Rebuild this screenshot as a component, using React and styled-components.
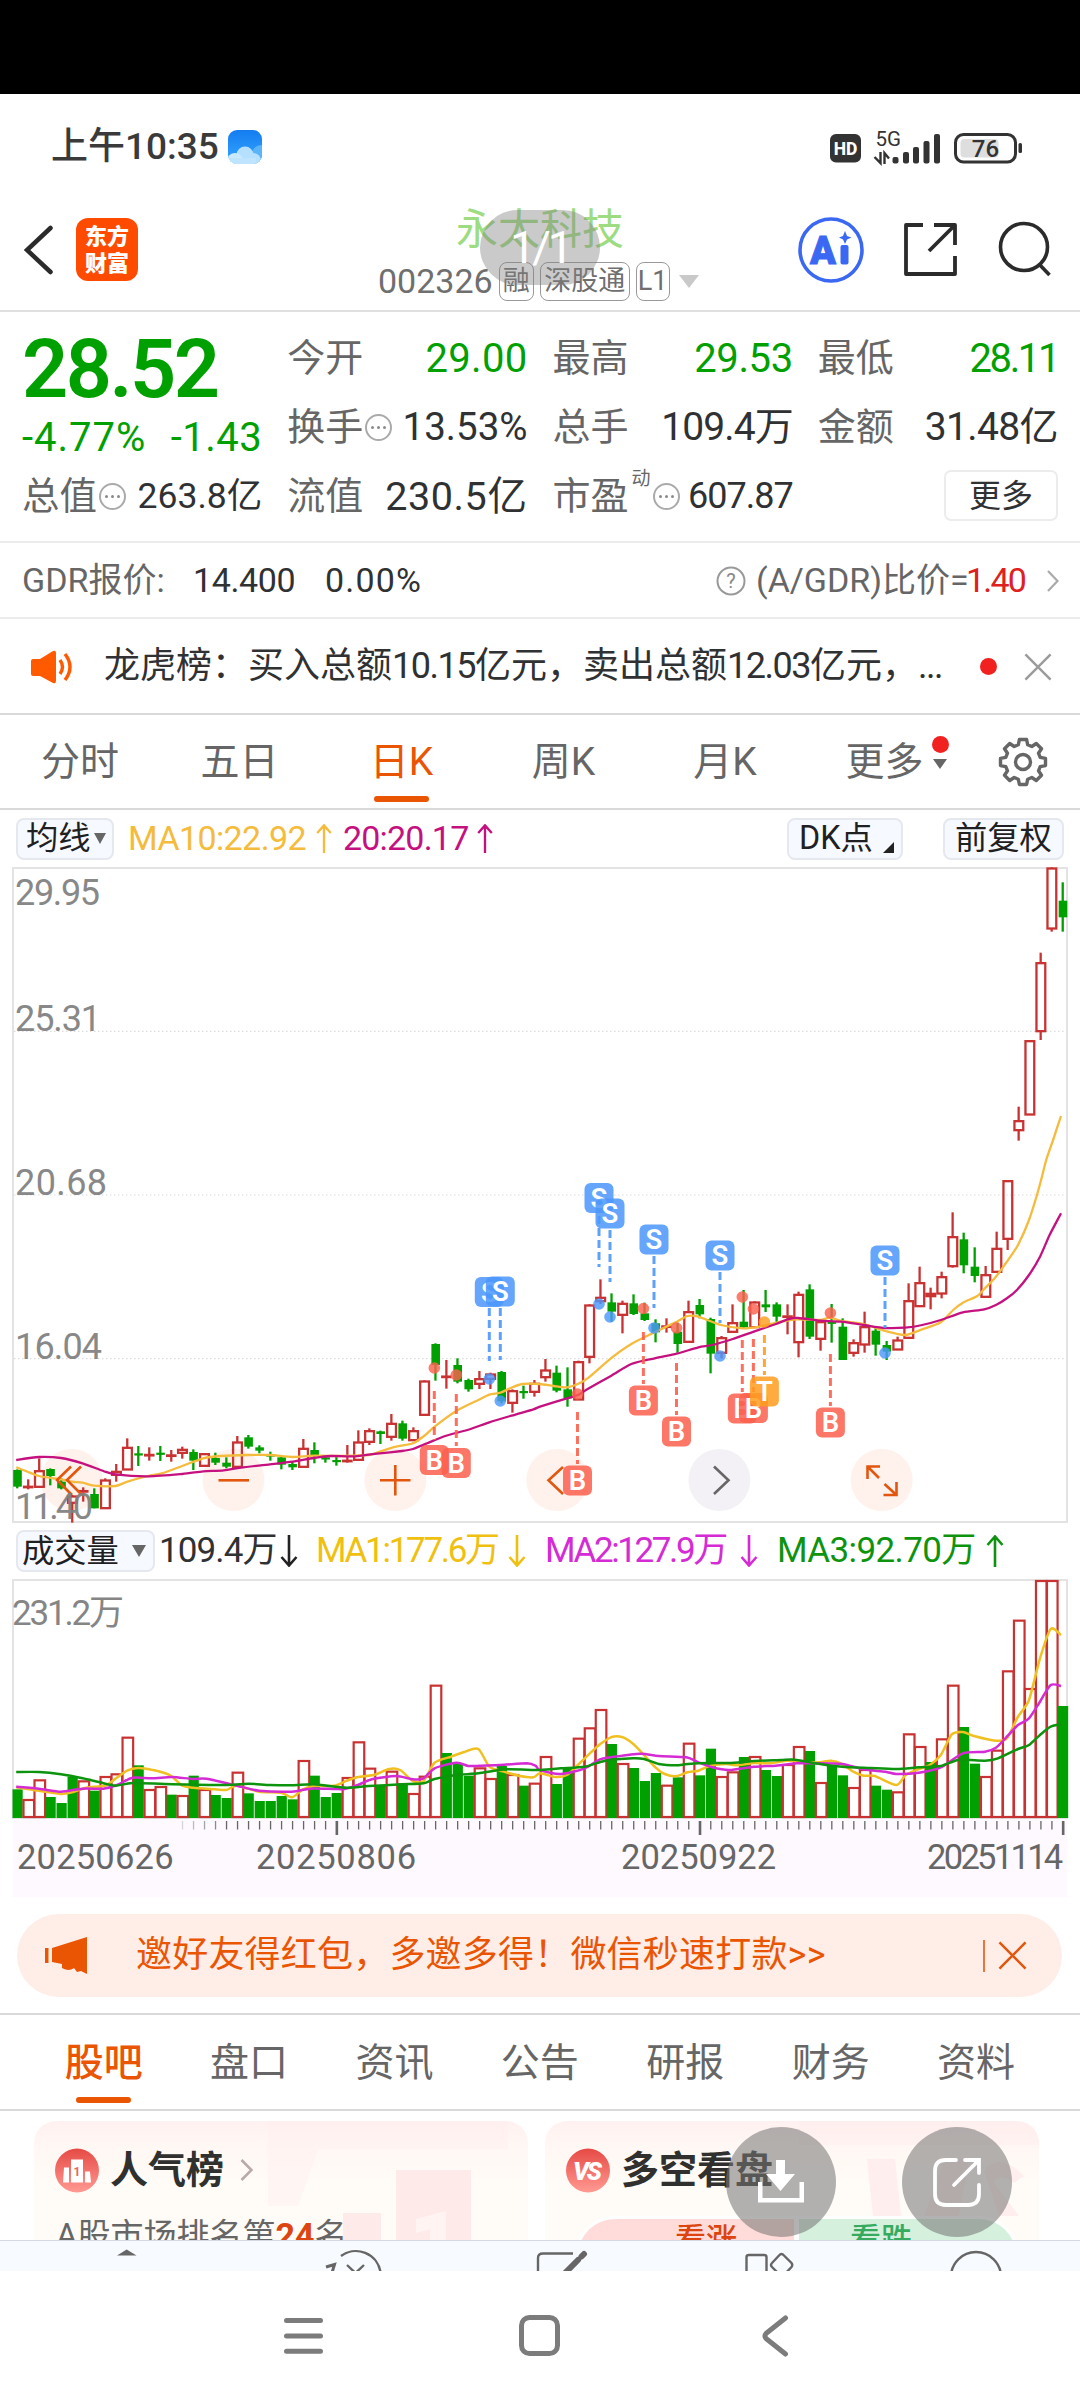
import React from "react";
import styled, { createGlobalStyle, css } from "styled-components";

const GREEN = "#00a000";
const RED = "#c93232";
const ORANGE = "#ea5504";
const YELLOW = "#f5bb3c";
const PINK = "#c5117f";

const Global = createGlobalStyle`
  html, body { margin: 0; padding: 0; background: #fff; }
  * { box-sizing: border-box; }
  body { font-family: Roboto, "Noto Sans CJK SC", sans-serif; color: #303133; }
  svg { display: block; }
`;

const Page = styled.div`
  position: relative;
  width: 1080px;
  height: 2400px;
  overflow: hidden;
  display: flex;
  flex-direction: column;
  background: #fff;
`;

const Text = styled.span`
  display: block;
  white-space: nowrap;
  line-height: 1.2;
  font-size: ${(p) => p.$size || 36}px;
  color: ${(p) => p.$color || "#303133"};
  font-weight: ${(p) => p.$weight || 400};
  letter-spacing: ${(p) => p.$ls || 0}px;
`;

const Num = styled.span`
  letter-spacing: -1.5px;
`;

const Cutout = styled.div`
  height: 94px;
  background: #000;
`;

const StatusBar = styled.div`
  height: 106px;
  padding: 1px 57px 0 51px;
  display: flex;
  align-items: center;
  justify-content: space-between;
`;

const StatusGroup = styled.div`
  display: flex;
  align-items: center;
  gap: 9px;
`;

const Header = styled.header`
  position: relative;
  height: 112px;
  border-bottom: 2px solid #dfdfdf;
  display: grid;
  grid-template-columns: 24px 52px 302px 1fr 282px;
`;

const BackSlot = styled.div`
  grid-column: 2;
  padding-top: 24px;
`;

const Logo = styled.div`
  margin-top: 18px;
  width: 62px;
  height: 63px;
  border-radius: 12px;
  background: #ff4b00;
  display: flex;
  flex-direction: column;
  align-items: center;
  justify-content: center;
`;

const LogoLine = styled.span`
  color: #fff;
  font-size: 22px;
  line-height: 27px;
  font-weight: 900;
`;

const TitleBlock = styled.div`
  display: flex;
  flex-direction: column;
  padding-top: 4px;
`;

const StockName = styled.h1`
  margin: 0 0 0 78px;
  font-size: 42px;
  line-height: 52px;
  font-weight: 400;
  color: #9ddc80;
`;

const CodeRow = styled.div`
  display: flex;
  align-items: center;
  margin-top: 5px;
  gap: 6px;
`;

const Tag = styled.span`
  height: 39px;
  width: ${(p) => p.$w}px;
  border: 1.5px solid #999;
  border-radius: 8px;
  display: flex;
  align-items: center;
  justify-content: center;
  color: #6f6f6f;
  font-size: 27px;
  line-height: 1;
  white-space: nowrap;
`;

const Triangle = styled.i`
  display: block;
  width: 0;
  height: 0;
  border-left: ${(p) => p.$w / 2}px solid transparent;
  border-right: ${(p) => p.$w / 2}px solid transparent;
  border-top: ${(p) => p.$h}px solid ${(p) => p.$color || "#666"};
  margin-left: ${(p) => p.$ml || 0}px;
`;

const HeaderActions = styled.div`
  display: grid;
  grid-template-columns: 102px 98px 54px;
  padding-top: 17px;
`;

const PagePill = styled.div`
  position: absolute;
  left: 480px;
  top: 10px;
  width: 120px;
  height: 75px;
  border-radius: 38px;
  background: rgba(128, 128, 128, 0.42);
  color: #fff;
  font-size: 45px;
  line-height: 75px;
  text-align: center;
  letter-spacing: -3px;
`;

const Quote = styled.section`
  height: 231px;
  padding: 0 22px;
  border-bottom: 2px solid #ececec;
  display: grid;
  grid-template-columns: repeat(4, 1fr);
  column-gap: 25px;
`;

const PriceColumn = styled.div`
  display: flex;
  flex-direction: column;
`;

const Price = styled.div`
  margin-top: 17px;
  height: 77px;
  line-height: 82px;
  font-size: 81px;
  font-weight: 600;
  color: ${GREEN};
  letter-spacing: -2.5px;
`;

const Split = styled.div`
  display: flex;
  align-items: center;
  justify-content: space-between;
  height: ${(p) => p.$h || 69}px;
  min-width: 0;
`;

const StatColumn = styled.div`
  display: flex;
  flex-direction: column;
  padding-top: 12px;
`;

const LabelGroup = styled.div`
  display: flex;
  align-items: center;
  gap: 2px;
`;

const Sup = styled.sup`
  align-self: flex-start;
  font-size: 19px;
  line-height: 19px;
  color: #666;
  margin: -5px 1px 0 1px;
`;

const Dots = styled.span`
  width: 27px;
  height: 27px;
  border: 2px solid #aaa;
  border-radius: 50%;
  display: flex;
  align-items: center;
  justify-content: center;
  gap: 3px;
  margin-left: ${(p) => p.$ml || 0}px;
  &::before, &::after, i { content: ""; width: 3px; height: 3px; border-radius: 50%; background: #8a8a8a; }
`;

const MoreButton = styled.button`
  align-self: flex-end;
  margin: 8px 0 0 0;
  width: 114px;
  height: 51px;
  padding: 0;
  border: 2px solid #ececec;
  border-radius: 7px;
  background: #fff;
  font: 400 32px/1 Roboto, "Noto Sans CJK SC", sans-serif;
  color: #303133;
`;

const GdrRow = styled.div`
  height: 76px;
  border-bottom: 2px solid #ececec;
  display: grid;
  grid-template-columns: 171px 132px 1fr 40px 210px 81px 12px;
  padding: 1px 21px 0 22px;
  align-items: center;
`;

const Ticker = styled.div`
  height: 96px;
  border-bottom: 2px solid #d9d9d9;
  display: grid;
  grid-template-columns: 73px 876px 44px 28px;
  padding: 1px 0 0 31px;
  align-items: center;
`;

const RedDot = styled.i`
  display: block;
  width: 17px;
  height: 17px;
  border-radius: 50%;
  background: #f0211f;
`;

const TabBar = styled.nav`
  height: ${(p) => p.$h}px;
  border-top: ${(p) => (p.$top ? "2px solid #d9d9d9" : "0")};
  border-bottom: 2px solid #d9d9d9;
  display: flex;
  padding: 0 ${(p) => p.$pad};
`;

const Tab = styled.div`
  position: relative;
  width: ${(p) => p.$w}px;
  height: 100%;
  padding-top: 2px;
  display: flex;
  align-items: center;
  justify-content: center;
  font-size: 39px;
  line-height: 1;
  color: ${(p) => (p.$active ? ORANGE : "#666")};
  font-weight: ${(p) => (p.$active && p.$bold ? 500 : 400)};
  ${(p) =>
    p.$active &&
    css`
      &::after {
        content: "";
        position: absolute;
        left: 50%;
        bottom: 6px;
        width: 55px;
        height: 6px;
        margin-left: -27.5px;
        border-radius: 3px;
        background: ${ORANGE};
      }
    `}
`;

const TabBadge = styled.div`
  display: flex;
  flex-direction: column;
  align-items: center;
  gap: 6px;
  margin-left: 8px;
  margin-top: -21px;
`;

const GearSlot = styled.div`
  flex: 1;
  display: flex;
  align-items: center;
  padding-left: 11px;
`;

const IndicatorRow = styled.div`
  height: ${(p) => p.$h}px;
  padding-left: 16px;
  display: grid;
  grid-template-columns: ${(p) => p.$cols};
  align-items: center;
`;

const Chip = styled.div`
  width: ${(p) => p.$w}px;
  height: 42px;
  border: 2px solid #e6e8ef;
  border-radius: 8px;
  background: #f6f9ff;
  display: flex;
  align-items: center;
  padding-left: ${(p) => p.$pl}px;
  font-size: 32.3px;
  line-height: 1;
  color: #1f2021;
  white-space: nowrap;
`;

const CornerMark = styled.i`
  display: block;
  width: 0;
  height: 0;
  border-left: 11px solid transparent;
  border-bottom: 11px solid #222;
  margin: 18px 0 0 10px;
`;

const AxisArea = styled.div`
  height: 78px;
  margin: 0 13px;
  background: #fdf9fe;
`;

const Dates = styled.div`
  display: grid;
  grid-template-columns: 239px 365px 306px 1fr;
  padding-left: 4px;
  height: 44px;
  align-items: center;
`;

const Banner = styled.div`
  height: 83px;
  margin: 17px 18px 16px 17px;
  border-radius: 42px;
  background: #ffeee7;
  display: grid;
  grid-template-columns: 91px 847px 15px 30px;
  padding-left: 28px;
  align-items: center;
`;

const BannerRule = styled.i`
  width: 1.5px;
  height: 32px;
  background: #e8763a;
`;

const Cards = styled.section`
  height: 129px;
  padding: 10px 41px 0 34px;
  display: grid;
  grid-template-columns: 494px 494px;
  column-gap: 17px;
  overflow: hidden;
`;

const Card = styled.article`
  position: relative;
  height: 160px;
  border-radius: 22px;
  background: linear-gradient(180deg, #fff1f1 0, #fff7f3 22px, #fffbf6 60px);
  overflow: hidden;
`;

const Watermark = styled.div`
  position: absolute;
  right: 0;
  top: 0;
`;

const CardHead = styled.div`
  position: relative;
  display: flex;
  align-items: center;
  height: 98px;
  padding-left: 21px;
`;

const CardTitle = styled.h2`
  margin: 0 16px 0 11px;
  font-size: 38px;
  line-height: 1;
  font-weight: 600;
  color: #30302e;
`;

const RankLine = styled.p`
  position: relative;
  margin: -3px 0 0 22px;
  font-size: 33px;
  line-height: 38px;
  color: #666;
  b { color: #dc4410; font-weight: 700; font-size: 34px; }
`;

const Poll = styled.div`
  position: relative;
  margin: -3px 20px 0 30px;
  height: 80px;
  display: grid;
  grid-template-columns: 216px 1fr;
  column-gap: 5px;
  border: 3px solid #fff;
  border-radius: 40px;
  background: #fff;
  overflow: hidden;
`;

const PollSide = styled.div`
  background: ${(p) => p.$bg};
  color: ${(p) => p.$color};
  font-size: 31px;
  line-height: 42px;
  font-weight: 500;
  padding-left: ${(p) => p.$pl}px;
`;

const BottomBar = styled.div`
  height: 31px;
  border-top: 1px solid #d4d8e0;
  background: #f7faff;
  overflow: hidden;
`;

const NavBar = styled.div`
  flex: 1;
  display: grid;
  grid-template-columns: 235px 243px 28px;
  align-items: center;
  padding-left: 284px;
`;

const FloatButton = styled.button`
  position: absolute;
  left: ${(p) => p.$x}px;
  top: 2127px;
  width: 110px;
  height: 110px;
  padding: 0;
  border: 0;
  border-radius: 50%;
  background: rgba(118, 118, 118, 0.56);
  display: flex;
  align-items: center;
  justify-content: center;
`;

/* ---------- market data ---------- */

const bx = (i) => 17.2 + 11.005 * i;

const seriesA = [
  "G688,690,740,745", "R718,738,744,748", "R655,692,742,742", "G685,687,708,736", "G715,725,745,748",
  "R765,768,790,848", "R742,750,758,785", "G745,762,805,805", "R715,720,806,806", "R672,694,706,725",
  "R595,622,690,690", "G618,640,644,678", "R622,643,648,662", "G618,638,642,663", "R630,645,649,665",
  "R620,628,640,656", "G628,636,662,690", "R640,641,679,679", "G638,654,668,675", "G652,668,680,685",
  "R588,606,682,682", "G585,592,620,626", "G616,622,632,640", "G635,643,650,662", "G648,652,674,688",
  "G665,672,682,690", "R597,625,682,682", "G607,630,645,670", "G645,652,657,668", "G648,660,666,677",
  "R615,660,666,668", "R571,606,661,661", "R565,572,607,615", "G572,574,582,612", "R522,550,592,602",
  "G542,550,596,602", "R562,572,602,602", "R421,423,526,526", "G310,312,375,422", "R360,408,413,446",
  "G355,375,425,430", "G416,420,448,455", "R393,416,433,447", "R398,402,418,447", "G393,396,484,490",
  "R448,452,490,518", "G437,453,459,476", "R420,430,457,470",
];
const seriesB = [
  "R657,690,713,725", "G677,698,752,757", "G682,748,775,800", "R662,665,780,780", "R493,495,652,670",
  "R418,472,485,492", "G460,487,515,545", "R482,490,526,580", "G463,490,522,525", "G488,520,540,543",
  "G538,550,577,607", "R535,557,563,578", "G548,575,612,638", "R482,515,607,607", "G477,495,523,535",
  "G533,537,641,700", "R588,593,640,655", "R493,548,577,577", "G450,545,562,565", "R484,486,563,563",
  "G450,493,502,516", "G487,493,530,547", "R493,527,533,583", "R455,463,608,652", "G433,448,590,597",
  "R540,545,598,632", "G492,545,550,608", "G535,560,660,660", "R598,608,640,650", "R515,560,615,638",
  "G560,572,614,647", "G603,615,635,660", "R590,600,630,630", "R430,482,595,595", "R380,428,500,500",
  "R443,460,470,508", "R395,410,462,475", "R217,290,380,383", "G278,298,376,400", "G322,380,408,427",
  "R378,404,472,472", "R275,325,397,397", "R120,122,298,330",
];
const seriesC = ["R770,812,842,872", "R570,572,795,795", "R308,338,545,570", "R52,54,237,245", "G97,152,202,245"];

const parse = (list, base) =>
  list.map((s) => ({ up: s[0] === "R", v: s.slice(1).split(",").map((n) => base + Number(n) / 3) }));
const candles = [...parse(seriesA, 1240), ...parse(seriesB, 1140), ...parse(seriesC, 850)];

const volumes = (
  "G808 R840 R781 G831 G849 G770 R784 G812 R771 R763 R653 G736 R810 R801 G824 R828 G767 R810 G825 G834 R758 G820 G843 G843 " +
  "G828 G838 R723 G767 G831 G819 R774 R667 R746 G795 R755 G790 R822 R770 R497 G699 G730 G767 R745 R777 G738 R765 G797 R791 " +
  "R711 G792 G742 R656 R625 R570 G672 R732 G744 G783 G759 R797 G772 R671 G766 G686 R771 R757 G711 R711 G750 G768 R735 R681 " +
  "G693 R789 G738 G766 R804 R750 G797 G809 R817 R643 R681 G726 R658 R497 G621 G731 R771 R692 R454 R302 R507 R183 R183 G558"
).split(" ").map((s) => ({ up: s[0] === "R", y: 1520 + Number(s.slice(1)) / 3 }));

const pts = (str, ox, oy) =>
  str.trim().split(" ").map((p) => {
    const [x, y] = p.split(",").map(Number);
    return [ox + x / 2.904, oy + y / 3];
  });

const smooth = (p) => {
  let d = `M${p[0][0].toFixed(1)} ${p[0][1].toFixed(1)}`;
  for (let i = 0; i < p.length - 1; i++) {
    const a = p[Math.max(0, i - 1)], b = p[i], c = p[i + 1], e = p[Math.min(p.length - 1, i + 2)];
    const k = 8;
    d += `C${(b[0] + (c[0] - a[0]) / k).toFixed(1)} ${(b[1] + (c[1] - a[1]) / k).toFixed(1)} ${(c[0] - (e[0] - b[0]) / k).toFixed(1)} ${(c[1] - (e[1] - b[1]) / k).toFixed(1)} ${c[0].toFixed(1)} ${c[1].toFixed(1)}`;
  }
  return d;
};

const ma10 = smooth([
  ...pts("47,682 80,695 113,708 177,718 209,725 240,728 273,737 335,738 370,725 430,708 470,700 529,678 590,655 640,648 720,645 784,645 850,651 911,647 1000,648 1071,645 1103,635 1150,620 1199,610 1235,585 1262,560 1325,513 1389,480 1421,464 1453,458 1485,443 1517,432", 0, 1240),
  ...pts("0,732 40,738 78,742 110,732 142,712 206,655 265,612 333,577 397,545 429,528 460,530 525,555 590,565 645,558 700,545 745,538 813,540 842,533 875,543 940,552 1003,573 1060,585 1110,568 1164,547 1200,510 1228,488 1270,468 1292,445 1324,410 1356,365 1388,315 1420,240 1450,140 1470,60 1490,0 1513,-72", 540, 1140),
]);
const ma20 = smooth([
  ...pts("47,660 113,651 177,654 240,670 300,693 335,703 432,709 529,702 590,694 650,691 700,683 784,673 850,665 911,654 960,648 1030,649 1103,640 1167,633 1199,627 1240,610 1293,588 1357,570 1421,547 1485,527 1549,508", 0, 1240),
  ...pts("0,800 78,775 110,765 142,745 206,708 265,672 333,655 397,641 460,622 500,615 560,597 621,575 685,552 720,538 750,534 813,542 875,545 940,555 1003,564 1060,563 1110,555 1164,540 1228,517 1290,508 1324,495 1356,475 1385,450 1420,405 1452,350 1480,285 1513,220", 540, 1140),
]);
const vol1 = smooth([
  ...pts("47,802 113,812 177,822 209,817 250,803 305,797 337,775 369,752 401,744 440,749 480,760 500,770 529,797 561,803 625,808 657,810 688,797 752,815 816,818 848,832 880,808 911,798 970,797 1007,782 1039,771 1085,765 1130,747 1162,750 1199,783 1230,783 1262,728 1310,710 1350,695 1389,687 1421,740 1453,752 1510,768 1549,772", 0, 1520),
  ...pts("0,760 45,771 78,765 110,735 142,703 174,673 206,652 238,651 270,671 302,705 335,742 362,762 395,769 429,757 460,752 493,738 540,732 575,736 621,729 670,730 720,722 781,727 813,727 845,722 877,732 908,754 940,767 972,768 1035,795 1062,765 1100,747 1132,735 1164,705 1196,643 1228,636 1260,648 1324,662 1356,655 1388,590 1420,540 1452,415 1483,327 1513,345", 540, 1520),
]);
const vol2 = smooth([
  ...pts("47,800 113,806 177,815 240,806 300,806 340,795 385,773 440,775 500,771 560,777 600,776 688,797 752,812 848,815 900,806 970,807 1000,807 1039,795 1080,778 1150,768 1199,778 1230,775 1262,745 1325,728 1360,738 1389,737 1453,735 1530,730 1555,737", 0, 1520),
  ...pts("0,750 60,762 130,745 174,718 206,712 290,701 345,708 425,712 460,727 500,742 550,750 621,740 685,737 745,730 790,730 877,732 940,748 1003,755 1035,762 1100,758 1164,742 1228,700 1292,695 1324,683 1356,650 1388,615 1420,595 1452,545 1483,495 1513,498", 540, 1520),
]);
const vol3 = smooth([
  ...pts("47,756 113,756 177,763 240,775 290,787 335,797 385,789 500,793 657,795 720,791 784,795 848,796 911,793 1007,803 1071,798 1167,793 1230,790 1262,777 1325,765 1389,760 1470,748", 0, 1520),
  ...pts("0,750 60,745 130,740 190,722 270,715 302,717 345,732 395,736 429,732 493,729 550,729 621,723 700,720 740,719 813,732 877,740 960,744 1035,747 1100,742 1164,738 1215,720 1292,722 1330,715 1388,687 1420,675 1452,645 1483,620 1513,612", 540, 1520),
]);

const BLUE_M = "#4c97fb";
const RED_M = "#fb614e";
const ORANGE_M = "#ff9d1f";
/* letter, colour, x, badge centre y, line start, line end, dot y */
const marks = [
  ["S", BLUE_M, 489.3, 1292, 1308, 1361, 1379],
  ["S", BLUE_M, 500.3, 1291.5, 1308, 1360, 1401],
  ["S", BLUE_M, 599, 1198, 1216, 1267, 1304],
  ["S", BLUE_M, 610, 1213.5, 1230, 1282, 1317],
  ["S", BLUE_M, 654, 1239.5, 1256, 1308, 1328],
  ["S", BLUE_M, 720, 1255.5, 1272, 1323, 1356],
  ["S", BLUE_M, 885, 1260.5, 1277, 1328, 1353],
  ["B", RED_M, 434.3, 1460, 1391, 1440, 1368],
  ["B", RED_M, 456.3, 1463, 1394, 1446, 1375],
  ["B", RED_M, 577.5, 1480.5, 1412, 1464, 1394],
  ["B", RED_M, 643.4, 1400.5, 1332, 1384, 1308.5],
  ["B", RED_M, 676.5, 1431.5, 1363, 1415, 1328],
  ["B", RED_M, 742.3, 1408.5, 1340, 1392, 1297],
  ["B", RED_M, 753.4, 1408, 1339, 1392, 1309],
  ["T", ORANGE_M, 764.4, 1391.5, 1335, 1375, 1322],
  ["B", RED_M, 830.4, 1422.5, 1354, 1406, 1313],
];

function Mark({ m }) {
  const [ch, color, x, y, y1, y2, dot] = m;
  return (
    <g>
      <line x1={x} x2={x} y1={y1} y2={y2} stroke={color} strokeWidth="3" strokeDasharray="8 4" opacity="0.9" />
      <circle cx={x} cy={dot} r="5.8" fill={color} opacity="0.82" />
      <rect x={x - 14.5} y={y - 15} width="29" height="30" rx="6" fill={color} opacity="0.86" />
      <text x={x} y={y + 9.800} textAnchor="middle" fontSize="27.500" fontWeight="600" fill="#fff" fontFamily="Roboto, sans-serif">{ch}</text>
    </g>
  );
}

function PriceChart() {
  const circle = [71.5, 233.5, 395.3, 557.3, 719.4, 881.6];
  const labels = [["29.95", 905, 85], ["25.31", 1030.5, 86], ["20.68", 1194.5, 92], ["16.04", 1358.5, 87], ["11.40", 1519, 78]];
  return (
    <svg width="1080" height="656" viewBox="0 867 1080 656">
      <rect x="13" y="868" width="1054" height="654" fill="none" stroke="#e3e3e3" strokeWidth="2" />
      {[1031.3, 1195, 1358.7].map((y) => (
        <line key={y} x1="14" x2="1066" y1={y} y2={y} stroke="#dcdcdc" strokeWidth="1.2" strokeDasharray="1.5 2.5" />
      ))}
      {circle.map((x, i) => (
        <circle key={x} cx={x} cy="1480" r="31" fill={i === 4 ? "#f4f1f6" : "#fff1ec"} />
      ))}
      {candles.map(({ up, v: [h, t, b, l] }, i) => {
        const x = bx(i);
        const c = up ? RED : GREEN;
        return up ? (
          <g key={i} stroke={c} strokeWidth="2.3" fill="none">
            {b - t > 3 ? <rect x={x - 4.2} y={t + 0.5} width="8.8" height={b - t - 1} /> : <line x1={x - 5.3} x2={x + 5.3} y1={(t + b) / 2} y2={(t + b) / 2} strokeWidth="2.8" />}
            {t > h && <line x1={x} x2={x} y1={h} y2={t} />}
            {l > b && <line x1={x} x2={x} y1={b} y2={l} />}
          </g>
        ) : (
          <g key={i} fill={c}>
            <rect x={x - 4} y={t} width="8.6" height={Math.max(2.2, b - t)} />
            <rect x={x - 1.1} y={h} width="2.3" height={l - h} />
          </g>
        );
      })}
      <path d={ma10} fill="none" stroke={YELLOW} strokeWidth="2.3" />
      <path d={ma20} fill="none" stroke={PINK} strokeWidth="2.3" />
      <g fill="none" stroke="#e2560d" strokeWidth="2.6">
        <path d="M71 1466.500L57 1480L72 1495M81 1466.500L67 1480L82 1495" />
        <path d="M218.500 1480.300H249" />
        <path d="M380 1480.300H410.500M395.300 1465V1495.500" />
        <path d="M563 1467L548.500 1480.300L563 1494" />
        <path d="M714 1466.500L728.500 1480.300L714 1494" stroke="#666" />
        <path d="M867.500 1479V1466.500H880M867.500 1466.500L879 1478M896.500 1482V1495H883.500M896.500 1495L884.500 1484" />
      </g>
      {marks.map((m, i) => <Mark key={i} m={m} />)}
      {labels.map(([s, y, w]) => (
        <text key={s} x="15" y={y} textLength={w} fontSize="36" fill="#808080" opacity="0.93" fontFamily="Roboto, sans-serif">{s}</text>
      ))}
    </svg>
  );
}

function VolumeChart() {
  return (
    <svg width="1080" height="240" viewBox="0 1579 1080 240">
      <rect x="13" y="1580" width="1054" height="239" fill="#fff" stroke="#e3e3e3" strokeWidth="2" />
      {volumes.map(({ up, y }, i) =>
        up ? (
          <rect key={i} x={bx(i) - 4.7} y={y} width="10.600" height={1817 - y} fill="#fff" stroke={RED} strokeWidth="2.2" />
        ) : (
          <rect key={i} x={bx(i) - 4.700} y={y} width="10.200" height={1818 - y} fill={GREEN} />
        )
      )}
      <g fill="none" strokeWidth="2.500">
        <path d={vol1} stroke="#f0c020" />
        <path d={vol2} stroke="#d52bd5" />
        <path d={vol3} stroke="#0d930d" />
      </g>
      <text x="12" y="1624.500" textLength="112" fontSize="35" fill="#858585" fontFamily="Roboto, 'Noto Sans CJK SC', sans-serif">231.2万</text>
    </svg>
  );
}

function Ticks() {
  const major = [29, 62, 95];
  const items = [];
  for (let i = 15; i <= 95; i++) items.push(i);
  return (
    <svg width="1054" height="17" viewBox="13 1819 1054 17">
      {items.map((i) => (
        <rect key={i} x={bx(i) - (major.includes(i) ? 0.8 : 0.4)} y="1821" width={major.includes(i) ? 2.6 : 1.3} height={major.includes(i) ? 14 : 8.500} fill="#666" opacity={i < 19 ? 0.25 + (i - 15) * 0.17 : 1} />
      ))}
    </svg>
  );
}

const Arrow = ({ color, down, h = 32 }) => (
  <svg width="18" height={h} viewBox="0 0 18 32" fill="none" stroke={color} strokeWidth="2.6">
    <path d={down ? "M9 0V30M1.500 22L9 30.500L16.500 22" : "M9 32V2M1.500 10L9 1.500L16.500 10"} />
  </svg>
);

const InfoDots = ({ ml }) => <Dots $ml={ml}><i /></Dots>;

const Close = ({ color, size = 30, w = 2.6 }) => (
  <svg width={size} height={size} viewBox="0 0 30 30" stroke={color} strokeWidth={w}><path d="M1.500 1.500L28.500 28.500M28.500 1.500L1.500 28.500" /></svg>
);

const gearPath = (() => {
  const c = 25;
  let d = "";
  for (let i = 0; i < 8; i++) {
    const a = (i * Math.PI) / 4 - Math.PI / 2;
    [[-0.27, 17.8], [-0.16, 22.8], [0.16, 22.8], [0.27, 17.8]].forEach(([o, r], j) => {
      d += `${i === 0 && j === 0 ? "M" : "L"}${(c + r * Math.cos(a + o)).toFixed(1)} ${(c + r * Math.sin(a + o)).toFixed(1)}`;
    });
  }
  return d + "Z";
})();

function StatusIcons() {
  return (
    <svg width="194" height="36" viewBox="829 130 194 36">
      <rect x="830" y="134" width="31" height="28.500" rx="6" fill="#333" />
      <text x="845.500" y="154.500" textAnchor="middle" fontSize="17.500" fontWeight="800" fill="#fff">HD</text>
      <text x="875.500" y="146" fontSize="20.500" fill="#333">5G</text>
      <path d="M880.500 152V163L874.500 157M884.500 164V153L889 158.500" stroke="#333" strokeWidth="2.400" fill="none" />
      {[[892.500, 157], [903, 152], [913, 147], [923.500, 141], [934, 134]].map(([x, y]) => (
        <rect key={x} x={x} y={y} width="6" height={163.500 - y} rx="2" fill="#333" />
      ))}
      <rect x="955.500" y="134.500" width="60" height="27.500" rx="8" fill="#fff" stroke="#333" strokeWidth="3" />
      <rect x="960.500" y="139" width="38" height="18.500" rx="4" fill="#dedede" />
      <rect x="1018.500" y="143" width="3.500" height="10" rx="1.500" fill="#333" />
      <text x="985.500" y="157" textAnchor="middle" fontSize="24" fontWeight="500" fill="#333">76</text>
    </svg>
  );
}

function BottomIcons() {
  return (
    <svg width="1080" height="30" viewBox="0 2240 1080 30" fill="none" stroke="#666" strokeWidth="2.400">
      <path d="M117 2254.500L126.700 2248.500L136.500 2254.500Z" fill="#666" stroke="none" />
      <path d="M341 2255A25 25 0 0 1 380.500 2271M347 2264L355.500 2272L364 2264" />
      <path d="M326 2266L334.500 2263.500L331 2275" strokeWidth="3" />
      <path d="M538 2272V2257Q538 2252.500 543 2252.500H573" />
      <path d="M565 2272L578 2259M581.500 2255.500L584 2253" strokeWidth="6" strokeLinecap="round" />
      <path d="M746.500 2275V2256Q746.500 2254 749 2254H764Q766.500 2254 766.500 2256V2275" />
      <path d="M779 2254.500Q781.500 2251.500 784 2254.500L791.500 2262Q793 2264 791.500 2266L782 2276L772 2266Q770 2264 772 2262Z" />
      <circle cx="976" cy="2276" r="25" />
    </svg>
  );
}

const labelColor = "#666";

function Stat({ label, value, color, size = 39, ls = 0, info, sup }) {
  return (
    <Split>
      <LabelGroup>
        <Text $size={38} $color={labelColor}>{label}</Text>
        {sup && <Sup>{sup}</Sup>}
        {info && <InfoDots ml={sup ? -1 : 0} />}
      </LabelGroup>
      <Text $size={size} $color={color} $ls={ls}>{value}</Text>
    </Split>
  );
}

export default function App() {
  return (
    <Page>
      <Global />
      <Cutout />
      <StatusBar>
        <StatusGroup>
          <Text $size={37} $weight={500} $color="#3a3a3a">上午10:35</Text>
          <svg width="34" height="34" viewBox="0 0 34 34">
            <defs>
              <linearGradient id="sky" x1="0" y1="0" x2="0" y2="1"><stop offset="0" stopColor="#147cf0" /><stop offset="1" stopColor="#35a8ff" /></linearGradient>
              <clipPath id="skyClip"><rect width="34" height="34" rx="9" /></clipPath>
            </defs>
            <g clipPath="url(#skyClip)">
              <rect width="34" height="34" fill="url(#sky)" />
              <circle cx="34" cy="26" r="11" fill="#5cb4f8" />
              <circle cx="17" cy="25" r="8.500" fill="#b6e0ff" />
              <circle cx="7" cy="31" r="8" fill="#c9e9ff" />
              <circle cx="25" cy="31" r="8" fill="#b6e0ff" />
              <rect y="28" width="28" height="6" fill="#bfe4ff" />
            </g>
          </svg>
        </StatusGroup>
        <StatusIcons />
      </StatusBar>

      <Header>
        <BackSlot>
          <svg width="30" height="52" viewBox="0 0 30 52" fill="none" stroke="#2b2b2b" strokeWidth="4.500" strokeLinecap="round"><path d="M26.500 4L3 26L26.500 48" /></svg>
        </BackSlot>
        <Logo><LogoLine>东方</LogoLine><LogoLine>财富</LogoLine></Logo>
        <TitleBlock>
          <StockName>永太科技</StockName>
          <CodeRow>
            <Text $size={34} $color="#6f6f6f">002326</Text>
            <Tag $w={35}>融</Tag>
            <Tag $w={90}>深股通</Tag>
            <Tag $w={34}>L1</Tag>
            <Triangle $w={20} $h={13} $color="#c9c9c9" $ml={3} />
          </CodeRow>
        </TitleBlock>
        <HeaderActions>
          <svg width="66" height="66" viewBox="0 0 66 66">
            <circle cx="33" cy="33" r="31" fill="#fff" stroke="#3a68f2" strokeWidth="3.600" />
            <text x="12" y="47" fontSize="38" fontWeight="900" fill="#3a68f2" stroke="#3a68f2" strokeWidth="1" fontFamily="Roboto, sans-serif">A</text>
            <rect x="42.500" y="28" width="8" height="19.500" rx="2" fill="#3a68f2" />
            <path d="M47 14L49 19L53.500 20.500L49 22.500L47 27L45 22.500L41 20.500L45 19Z" fill="#3a68f2" />
          </svg>
          <svg width="60" height="64" viewBox="0 0 60 64" fill="none" stroke="#2b2b2b" strokeWidth="3.800" strokeLinejoin="round">
            <path d="M23 8H6V57H55V39M34 8H55V28M55 8L29 34" />
          </svg>
          <svg width="54" height="60" viewBox="0 0 54 60" fill="none" stroke="#2b2b2b" strokeWidth="3.600">
            <circle cx="26" cy="30" r="23.500" /><path d="M41 47L51.500 58" />
          </svg>
        </HeaderActions>
        <PagePill>1/1</PagePill>
      </Header>

      <Quote>
        <PriceColumn>
          <Price>28.52</Price>
          <Split $h={64}>
            <Text $size={40} $color={GREEN} $ls={1}>-4.77%</Text>
            <Text $size={40} $color={GREEN} $ls={0.5}>-1.43</Text>
          </Split>
          <Split $h={53}>
            <LabelGroup><Text $size={37.500} $color={labelColor}>总值</Text><InfoDots /></LabelGroup>
            <Text $size={35.500}>263.8亿</Text>
          </Split>
        </PriceColumn>
        <StatColumn>
          <Stat label="今开" value="29.00" color={GREEN} size={40} ls={0.3} />
          <Stat label="换手" value="13.53%" info size={38.500} />
          <Stat label="流值" value="230.5亿" size={39.500} ls={0.6} />
        </StatColumn>
        <StatColumn>
          <Stat label="最高" value="29.53" color={GREEN} size={40} ls={-0.4} />
          <Stat label="总手" value="109.4万" ls={-0.9} />
          <Stat label="市盈" value="607.87" sup="动" info size={36} ls={-1} />
        </StatColumn>
        <StatColumn>
          <Stat label="最低" value="28.11" color={GREEN} size={40} ls={-2.4} />
          <Stat label="金额" value="31.48亿" ls={-0.6} />
          <MoreButton>更多</MoreButton>
        </StatColumn>
      </Quote>

      <GdrRow>
        <Text $size={34} $color={labelColor}>GDR报价:</Text>
        <Text $size={34} $ls={-0.4}>14.400</Text>
        <Text $size={34} $ls={1.2}>0.00%</Text>
        <svg width="30" height="30" viewBox="0 0 30 30"><circle cx="15" cy="15" r="13.500" fill="none" stroke="#999" strokeWidth="2" /><text x="15" y="22" fontSize="20" textAnchor="middle" fill="#888">?</text></svg>
        <Text $size={34} $color={labelColor}>(A/GDR)比价=</Text>
        <Text $size={34} $color="#e02020" $ls={-1.800}>1.40</Text>
        <svg width="12" height="22" viewBox="0 0 12 22" fill="none" stroke="#aaa" strokeWidth="2.200"><path d="M1 1L10.500 11L1 21" /></svg>
      </GdrRow>

      <Ticker>
        <svg width="42" height="34" viewBox="0 0 42 34">
          <path d="M2 9H9L22 1Q25 0 25 3V31Q25 34 22 33L9 26H2Q0 26 0 24V11Q0 9 2 9Z" fill="#ff5a00" />
          <path d="M29 10Q34 17 29 24M34 4Q44 17 34 30" fill="none" stroke="#ff5a00" strokeWidth="3.400" />
        </svg>
        <Text $size={36}>龙虎榜：买入总额<Num>10.15</Num>亿元，卖出总额<Num>12.03</Num>亿元，<Num>...</Num></Text>
        <RedDot />
        <Close color="#9b9b9b" size={28} />
      </Ticker>

      <TabBar $h={95} $pad="0">
        <Tab $w={160}>分时</Tab>
        <Tab $w={159}>五日</Tab>
        <Tab $w={165} $active>日K</Tab>
        <Tab $w={159}>周K</Tab>
        <Tab $w={164}>月K</Tab>
        <Tab $w={180}>更多<TabBadge><RedDot /><Triangle $w={15} $h={10} /></TabBadge></Tab>
        <GearSlot>
          <svg width="50" height="50" viewBox="0 0 50 50" fill="none" stroke="#666" strokeWidth="3.400" strokeLinejoin="round">
            <path d={gearPath} /><circle cx="25" cy="25" r="7.500" />
          </svg>
        </GearSlot>
      </TabBar>

      <IndicatorRow $h={57} $cols="112px 187px 28px 133px 311px 156px 122px">
        <Chip $w={98} $pl={8}>均线<Triangle $w={13} $h={11} $ml={3} /></Chip>
        <Text $size={34} $color={YELLOW} $ls={-0.600}>MA10:22.92</Text>
        <Arrow color={YELLOW} h={29} />
        <Text $size={34} $color={PINK} $ls={-0.800}>20:20.17</Text>
        <Arrow color={PINK} h={29} />
        <Chip $w={116} $pl={10}>DK点<CornerMark /></Chip>
        <Chip $w={121} $pl={10}>前复权</Chip>
      </IndicatorRow>

      <PriceChart />

      <IndicatorRow $h={56} $cols="143px 121px 36px 192px 37px 195px 37px 209px 18px">
        <Chip $w={139} $pl={4}>成交量<Triangle $w={14} $h={12} $ml={13} /></Chip>
        <Text $size={35} $ls={-0.900}>109.4万</Text>
        <Arrow color="#222" down />
        <Text $size={35} $color="#f0c010" $ls={-2.300}>MA1:177.6万</Text>
        <Arrow color="#f0c010" down />
        <Text $size={35} $color="#d52bd5" $ls={-2.400}>MA2:127.9万</Text>
        <Arrow color="#d52bd5" down />
        <Text $size={35} $color="#0d930d" $ls={-0.600}>MA3:92.70万</Text>
        <Arrow color="#0d930d" />
      </IndicatorRow>

      <VolumeChart />

      <AxisArea>
        <Ticks />
        <Dates>
          <Text $size={34.500} $color="#666" $ls={0.200}>20250626</Text>
          <Text $size={34.500} $color="#666" $ls={0.700}>20250806</Text>
          <Text $size={34.500} $color="#666">20250922</Text>
          <Text $size={34.500} $color="#666" $ls={-2.700}>20251114</Text>
        </Dates>
      </AxisArea>

      <Banner>
        <svg width="42" height="38" viewBox="0 0 42 38" fill={ORANGE}>
          <path d="M0 11H3.500V26H0ZM7 11L42 0V37L36 34L32 35L29 31Q24 35 17 31V27L7 25Z" />
        </svg>
        <Text $size={36} $color={ORANGE} $ls={0.200}>邀好友得红包，多邀多得！微信秒速打款&gt;&gt;</Text>
        <BannerRule />
        <Close color="#e2560d" size={29} />
      </Banner>

      <TabBar $h={98} $pad="31px" $top>
        {["股吧", "盘口", "资讯", "公告", "研报", "财务", "资料"].map((t, i) => (
          <Tab key={t} $w={145.400} $active={i === 0} $bold>{t}</Tab>
        ))}
      </TabBar>

      <Cards>
        <Card>
          <Watermark>
            <svg width="260" height="130" viewBox="0 0 260 130">
              <path d="M50 28H240V0H0V85H30Z" fill="#ffeeee" opacity="0.4" />
              <path d="M128 49H203V130H128ZM75 92H113V130H75Z" fill="#ffe6e7" opacity="0.8" />
              <path d="M148 98L178 90V130H162V108L148 112Z" fill="#fff4f2" />
            </svg>
          </Watermark>
          <CardHead>
            <svg width="44" height="45" viewBox="0 0 44 44">
              <defs><linearGradient id="badge" x1="0" y1="0" x2="0" y2="1"><stop offset="0" stopColor="#e64a45" /><stop offset="1" stopColor="#ff9a92" /></linearGradient></defs>
              <circle cx="22" cy="22" r="22" fill="url(#badge)" />
              <path d="M16 11H28V34H16ZM9 19H14V34H8ZM30 23H35L36 34H30Z" fill="#fff" />
              <text x="22" y="27" fontSize="12" fontWeight="700" textAnchor="middle" fill="#e8645e">1</text>
            </svg>
            <CardTitle>人气榜</CardTitle>
            <svg width="13" height="22" viewBox="0 0 13 22" fill="none" stroke="#b9a9a9" strokeWidth="2.600"><path d="M1.500 1L11.500 11L1.500 21" /></svg>
          </CardHead>
          <RankLine>A股市场排名第<b>24</b>名</RankLine>
        </Card>
        <Card>
          <Watermark>
            <svg width="240" height="130" viewBox="0 0 240 130">
              <path d="M0 0H240V24H0Z" fill="#ffebec" opacity="0.4" />
              <path d="M68 38H96L102 95H74ZM125 95L145 38H170L160 95ZM185 50Q200 30 225 55L215 62Q200 50 195 62L220 95H200Z" fill="#ffe6e7" opacity="0.6" />
            </svg>
          </Watermark>
          <CardHead>
            <svg width="44" height="45" viewBox="0 0 44 44">
              <circle cx="22" cy="22" r="22" fill="url(#badge)" />
              <text x="21.500" y="31" fontSize="25" fontWeight="900" fontStyle="italic" textAnchor="middle" textLength="29" fill="#fff" fontFamily="Roboto, sans-serif">VS</text>
            </svg>
            <CardTitle>多空看盘</CardTitle>
          </CardHead>
          <Poll>
            <PollSide $bg="#ffdcd9" $color="#dc4410" $pl={97}>看涨</PollSide>
            <PollSide $bg="#d6f0de" $color="#36ab5f" $pl={51}>看跌</PollSide>
          </Poll>
        </Card>
      </Cards>

      <BottomBar><BottomIcons /></BottomBar>

      <NavBar>
        <svg width="39" height="40" viewBox="0 0 39 40" stroke="#7c7c7c" strokeWidth="5" strokeLinecap="round"><path d="M2.500 4.500H36.500M2.500 20H36.500M2.500 35.300H36.500" /></svg>
        <svg width="41" height="41" viewBox="0 0 41 41" fill="none" stroke="#7c7c7c" strokeWidth="5"><rect x="2.500" y="2.500" width="36" height="36" rx="8" /></svg>
        <svg width="28" height="42" viewBox="0 0 28 42" fill="none" stroke="#7c7c7c" strokeWidth="5" strokeLinecap="round" strokeLinejoin="round"><path d="M23.500 3L4 18.500Q2 21 4 23.500L23.500 39" /></svg>
      </NavBar>

      <FloatButton $x={726}>
        <svg width="48" height="44" viewBox="0 0 48 44" fill="#fff">
          <path d="M19 0H28V14H38L23.500 31L9 14H19ZM1 22H5.500V38H42.500V22H47V42.500H1Z" />
        </svg>
      </FloatButton>
      <FloatButton $x={902}>
        <svg width="50" height="52" viewBox="0 0 50 52" fill="none" stroke="#fff" strokeWidth="3.800" strokeLinecap="round">
          <path d="M24 4H14Q3 4 3 15V38Q3 49 14 49H36Q47 49 47 38V29M33 4H47V17M46 5L22 29" />
        </svg>
      </FloatButton>
    </Page>
  );
}
